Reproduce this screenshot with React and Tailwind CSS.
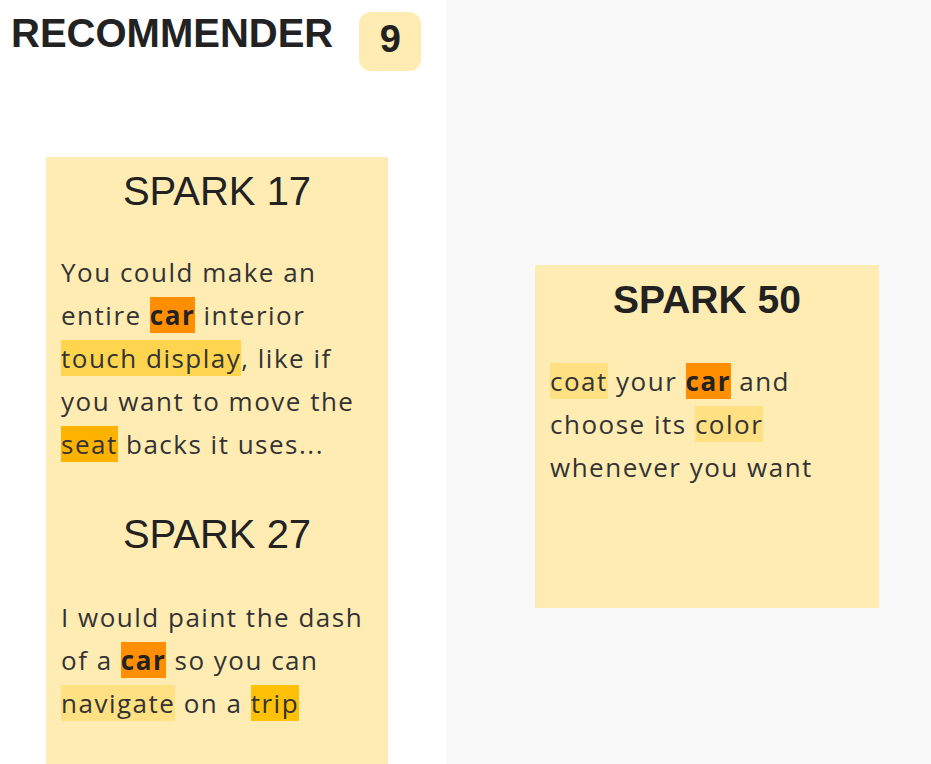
import React from 'react';

const sparks = {
  left: [
    {
      id: 17,
      lines: [
        ['You could make an'],
        ['entire ', { t: 'car', c: 'key' }, ' interior'],
        [{ t: 'touch display', c: 'bg-[#ffd54f]' }, ', like if'],
        ['you want to move the'],
        [{ t: 'seat', c: 'bg-[#ffb300]' }, ' backs it uses...'],
      ],
    },
    {
      id: 27,
      lines: [
        ['I would paint the dash'],
        ['of a ', { t: 'car', c: 'key' }, ' so you can'],
        [{ t: 'navigate', c: 'bg-[#ffe082]' }, ' on a ', { t: 'trip', c: 'bg-[#ffc107]' }],
      ],
    },
  ],
  pinned: {
    id: 50,
    lines: [
      [{ t: 'coat', c: 'bg-[#ffe082]' }, ' your ', { t: 'car', c: 'key' }, ' and'],
      ['choose its ', { t: 'color', c: 'bg-[#ffe082]' }],
      ['whenever you want'],
    ],
  },
};

const bodyFont = { fontFamily: '"Open Sans", "Noto Sans", sans-serif' };
const headFont = { fontFamily: '"Liberation Sans", Arial, sans-serif' };

function SparkText({ lines, gap = 'mt-[38px]' }) {
  return (
    <p
      className={`${gap} px-[15px] text-[26px] leading-[43px] font-medium tracking-[1.5px] text-[#333]`}
      style={bodyFont}
    >
      {lines.map((line, i) => (
        <React.Fragment key={i}>
          {line.map((part, j) =>
            typeof part === 'string' ? (
              <span key={j}>{part}</span>
            ) : part.c === 'key' ? (
              <span key={j} className="bg-[#ff8f00] font-bold text-[#222]">
                {part.t}
              </span>
            ) : (
              <span key={j} className={part.c}>
                {part.t}
              </span>
            )
          )}
          {i < lines.length - 1 && <br />}
        </React.Fragment>
      ))}
    </p>
  );
}

export default function App() {
  return (
    <div className="flex min-h-screen">
      {/* Recommender column */}
      <div className="w-[446px] shrink-0 bg-white">
        <div className="flex items-start pl-[11px]">
          <h1
            className="pt-[9px] text-[40px] leading-[48px] font-bold text-[#222]"
            style={headFont}
          >
            RECOMMENDER
          </h1>
          <div
            className="ml-[26px] mt-[12px] flex h-[59px] w-[62px] items-center justify-center rounded-xl bg-[#ffecb3] pb-[4px] text-[38px] font-bold text-[#222]"
            style={headFont}
          >
            9
          </div>
        </div>

        <div className="ml-[46px] mt-[86px] w-[342px] bg-[#ffecb3] pt-[12px] pb-[60px]">
          {sparks.left.map((s, i) => (
            <div key={s.id} className={i > 0 ? 'mt-[46px]' : ''}>
              <h2
                className="text-center text-[40px] leading-[44px] text-[#222]"
                style={headFont}
              >
                SPARK {s.id}
              </h2>
              <SparkText lines={s.lines} gap={i > 0 ? 'mt-[40px]' : 'mt-[38px]'} />
            </div>
          ))}
        </div>
      </div>

      {/* Board */}
      <div className="flex-1 bg-[#f9f9f9] pl-[89px] pt-[265px]">
        <div className="h-[343px] w-[344px] bg-[#ffecb3] pt-[13px]">
          <h2
            className="text-center text-[39px] leading-[44px] font-bold text-[#222]"
            style={headFont}
          >
            SPARK {sparks.pinned.id}
          </h2>
          <SparkText lines={sparks.pinned.lines} />
        </div>
      </div>
    </div>
  );
}
